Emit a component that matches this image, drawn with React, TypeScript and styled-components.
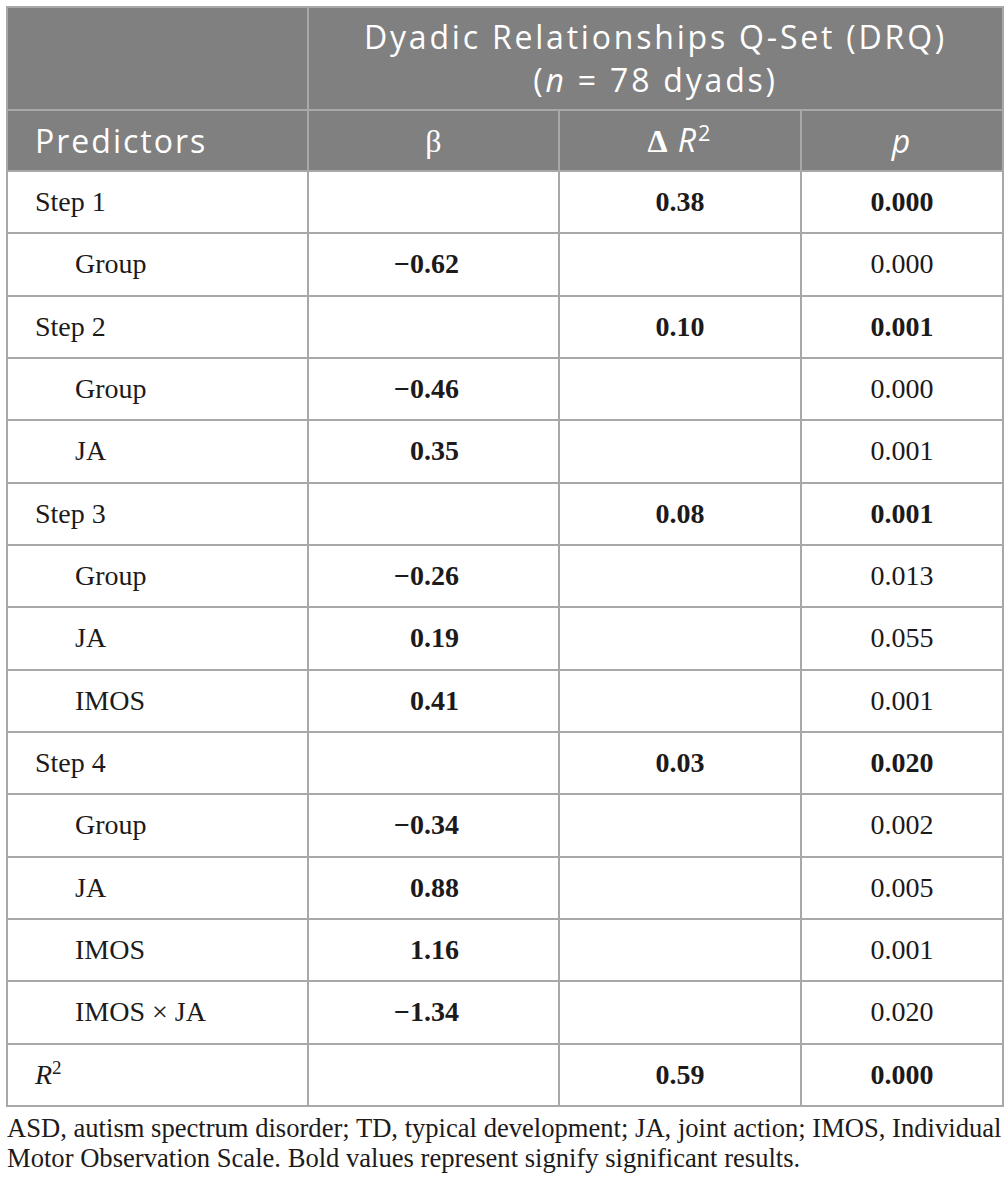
import React from "react";
import styled, { createGlobalStyle } from "styled-components";

const Global = createGlobalStyle`
  html, body { margin: 0; padding: 0; background: #ffffff; }
  body { padding: 6px 8px 0 6px; }
`;

const Table = styled.table`
  border-collapse: collapse;
  width: 996px;
  table-layout: fixed;
  font-family: "Liberation Serif", "Times New Roman", serif;
  color: #1c1a1a;
`;

const HeadCell = styled.th<{ $align?: string; $pad?: string }>`
  background: #808080;
  color: #ffffff;
  font-family: "Open Sans", "Noto Sans", sans-serif;
  font-weight: 400;
  font-size: 32px;
  letter-spacing: 2px;
  line-height: 40px;
  border: 2px solid #a8a8a8;
  text-align: ${(p) => p.$align || "center"};
  padding: ${(p) => p.$pad || "0"};
  height: 59px;
  vertical-align: middle;
`;

const SpanHead = styled(HeadCell)`
  height: 99px;
  padding: 0 0 2px;
  line-height: 43px;
  letter-spacing: 2.8px;
`;

const Cell = styled.td<{ $bold?: boolean }>`
  border: 2px solid #a8a8a8;
  font-size: 28px;
  height: 60.33px;
  vertical-align: middle;
  text-align: center;
  padding: 0;
  font-weight: ${(p) => (p.$bold ? 700 : 400)};
`;

const Label = styled(Cell)<{ $indent?: boolean }>`
  text-align: left;
  padding-left: ${(p) => (p.$indent ? "67px" : "27px")};
`;

const Beta = styled(Cell)`
  text-align: right;
  padding-right: 99px;
  font-weight: 700;
`;

const Delta = styled.span`
  font-family: "Liberation Serif", serif;
  font-weight: 700;
  letter-spacing: 0;
`;

const It = styled.i``;

const Sup = styled.sup`
  font-size: 0.68em;
  vertical-align: 0.5em;
  line-height: 0;
`;

const Serif = styled.span`
  font-family: "Liberation Serif", serif;
  letter-spacing: 0;
`;

const Note = styled.p`
  margin: 6px 0 0 1px;
  width: 1000px;
  font-family: "Liberation Serif", "Times New Roman", serif;
  font-size: 26.6px;
  line-height: 30px;
  color: #1c1a1a;
`;

type Row = { label: React.ReactNode; indent?: boolean; beta?: string; dr?: string; p: string; pBold?: boolean };

const rows: Row[] = [
  { label: "Step 1", dr: "0.38", p: "0.000", pBold: true },
  { label: "Group", indent: true, beta: "\u22120.62", p: "0.000" },
  { label: "Step 2", dr: "0.10", p: "0.001", pBold: true },
  { label: "Group", indent: true, beta: "\u22120.46", p: "0.000" },
  { label: "JA", indent: true, beta: "0.35", p: "0.001" },
  { label: "Step 3", dr: "0.08", p: "0.001", pBold: true },
  { label: "Group", indent: true, beta: "\u22120.26", p: "0.013" },
  { label: "JA", indent: true, beta: "0.19", p: "0.055" },
  { label: "IMOS", indent: true, beta: "0.41", p: "0.001" },
  { label: "Step 4", dr: "0.03", p: "0.020", pBold: true },
  { label: "Group", indent: true, beta: "\u22120.34", p: "0.002" },
  { label: "JA", indent: true, beta: "0.88", p: "0.005" },
  { label: "IMOS", indent: true, beta: "1.16", p: "0.001" },
  { label: "IMOS \u00d7 JA", indent: true, beta: "\u22121.34", p: "0.020" },
  {
    label: (
      <>
        <It>R</It>
        <Sup>2</Sup>
      </>
    ),
    dr: "0.59",
    p: "0.000",
    pBold: true,
  },
];

export default function App() {
  return (
    <>
      <Global />
      <Table>
        <colgroup>
          <col style={{ width: 301 }} />
          <col style={{ width: 251 }} />
          <col style={{ width: 242 }} />
          <col style={{ width: 202 }} />
        </colgroup>
        <thead>
          <tr>
            <SpanHead />
            <SpanHead colSpan={3}>
              Dyadic Relationships Q-Set (DRQ)
              <br />(<It>n</It> = 78 dyads)
            </SpanHead>
          </tr>
          <tr>
            <HeadCell $align="left" $pad="0 0 0 27px">Predictors</HeadCell>
            <HeadCell>
              <Serif>β</Serif>
            </HeadCell>
            <HeadCell>
              <Delta>Δ</Delta> <It>R</It>
              <Sup>2</Sup>
            </HeadCell>
            <HeadCell>
              <It>p</It>
            </HeadCell>
          </tr>
        </thead>
        <tbody>
          {rows.map((r, i) => (
            <tr key={i}>
              <Label $indent={r.indent}>{r.label}</Label>
              <Beta>{r.beta || ""}</Beta>
              <Cell $bold>{r.dr || ""}</Cell>
              <Cell $bold={r.pBold}>{r.p}</Cell>
            </tr>
          ))}
        </tbody>
      </Table>
      <Note>
        ASD, autism spectrum disorder; TD, typical development; JA, joint action; IMOS, Individual Motor
        Observation Scale. Bold values represent signify significant results.
      </Note>
    </>
  );
}
